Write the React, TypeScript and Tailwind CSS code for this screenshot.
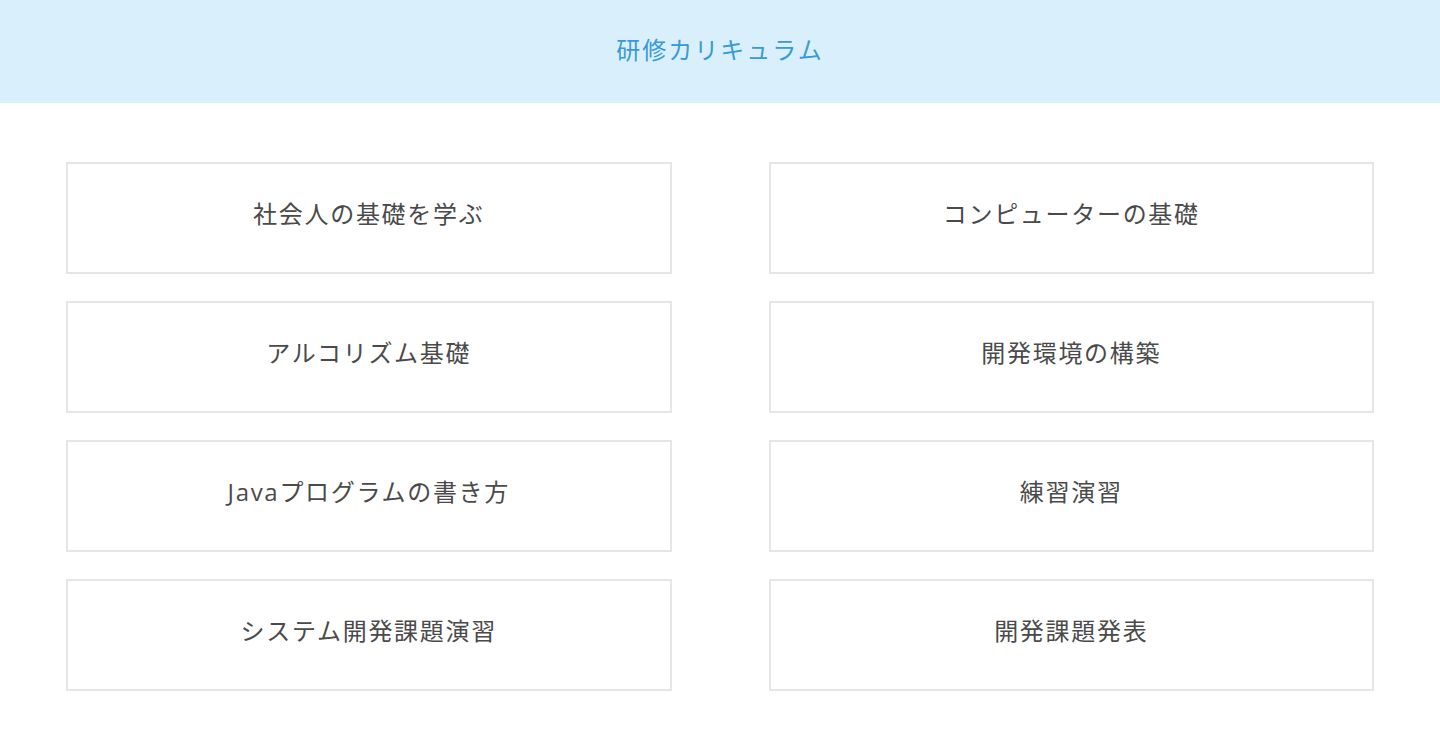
import React from 'react';

const courses = [
  '社会人の基礎を学ぶ',
  'コンピューターの基礎',
  'アルコリズム基礎',
  '開発環境の構築',
  'Javaプログラムの書き方',
  '練習演習',
  'システム開発課題演習',
  '開発課題発表',
];

const App = () => {
  return (
    <div
      className="min-h-screen bg-white"
      style={{ fontFamily: '"Open Sans", "Noto Sans CJK JP", sans-serif' }}
    >
      {/* Header */}
      <header className="h-[103px] bg-[#d9f0fc] flex items-center justify-center">
        <h1 className="text-[24px] text-[#3a9ad9] tracking-[2px] pb-[4px]">研修カリキュラム</h1>
      </header>

      {/* Curriculum grid */}
      <main className="px-[66px] pt-[59px]">
        <div className="grid grid-cols-2 gap-x-[97px] gap-y-[27px]">
          {courses.map((title) => (
            <div
              key={title}
              className="h-[112px] border-2 border-[#e6e6e6] flex items-center justify-center"
            >
              <span className="text-[24px] text-[#4a4a4a] tracking-[1.7px] pb-[9px]">{title}</span>
            </div>
          ))}
        </div>
      </main>
    </div>
  );
};

export default App;
